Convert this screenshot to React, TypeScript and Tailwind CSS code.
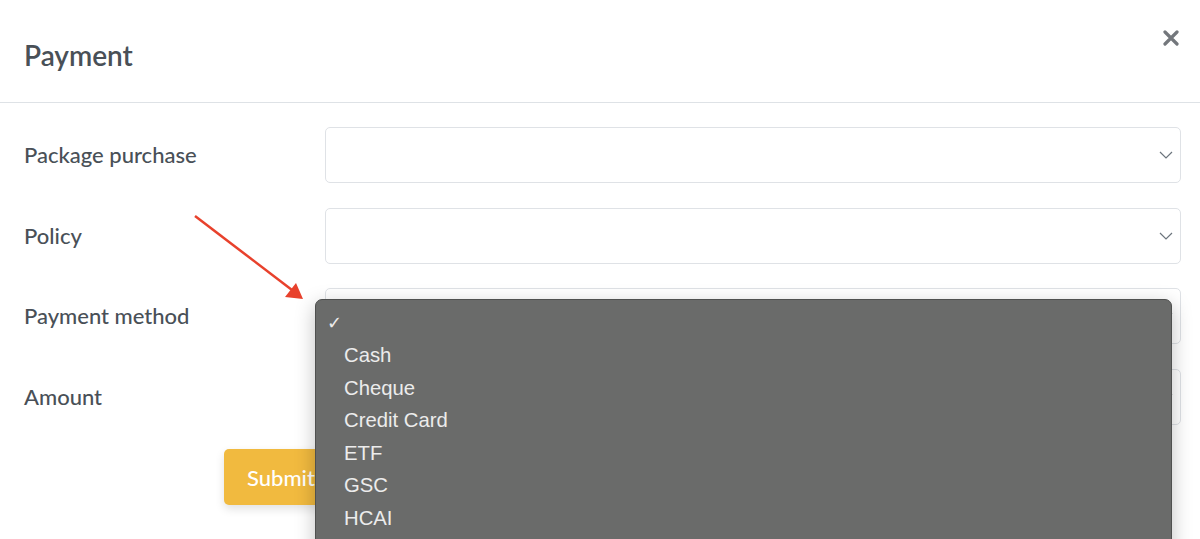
import React from "react";

function Chevron() {
  return (
    <svg width="14" height="8" viewBox="0 0 14 8" className="absolute right-[7px] top-1/2 -translate-y-1/2">
      <path d="M1 1l6 6 6-6" fill="none" stroke="#6c757d" strokeWidth="1.2" />
    </svg>
  );
}

function SelectBox() {
  return (
    <div className="relative h-[56px] flex-1 rounded-[5px] border border-[#dfe2e6] bg-white">
      <Chevron />
    </div>
  );
}

export default function App() {
  const items = ["Cash", "Cheque", "Credit Card", "ETF", "GSC", "HCAI"];
  const rows = ["Package purchase", "Policy", "Payment method", "Amount"];
  return (
    <div className="relative h-[539px] w-[1200px] overflow-hidden bg-white" style={{ fontFamily: "Lato, 'Open Sans', sans-serif" }}>
      <div className="flex h-[103px] items-start justify-between border-b border-[#dee2e6] pl-6 pr-[21px]">
        <h1 className="mt-[37px] text-[28px] font-semibold leading-[36px] text-[#495057]">Payment</h1>
        <svg width="16" height="16" viewBox="0 0 16 16" className="mt-[30px]">
          <path d="M2 2l12 12M14 2L2 14" stroke="#73777c" strokeWidth="3.2" strokeLinecap="round" />
        </svg>
      </div>
      <div className="flex flex-col gap-[24.6px] pl-6 pr-[19px] pt-[24px]">
        {rows.map((r) => (
          <div key={r} className="flex items-center">
            <div className="-mt-[1px] w-[301px] text-[22px] font-medium text-[#495057]">{r}</div>
            <SelectBox />
          </div>
        ))}
        <div className="pl-[200px]">
          <button className="h-[56px] w-[130px] rounded-[5px] bg-[#f1ba3f] pl-[23px] text-left text-[22px] font-medium text-white shadow-[0_4px_10px_rgba(0,0,0,0.12)]">
            Submit
          </button>
        </div>
      </div>

      <svg className="absolute left-0 top-0" width="1200" height="539">
        <line x1="195" y1="216" x2="292" y2="290" stroke="#e8412c" strokeWidth="2.5" />
        <polygon points="303,299 285,297 296,283" fill="#e8412c" />
      </svg>

      <div
        className="absolute left-[315px] top-[299px] h-[260px] w-[857px] rounded-[7px] border border-[#4f504f] bg-[#6a6b6a] pt-[8px] shadow-[0_6px_20px_rgba(0,0,0,0.25)]"
        style={{ fontFamily: "'Liberation Sans', Arial, sans-serif" }}
      >
        <div className="flex h-[31px] items-center pl-[11px] text-[18px] text-[#ececec]">✓</div>
        {items.map((i) => (
          <div key={i} className="flex h-[32.6px] items-center pl-[28px] text-[20.3px] text-[#ececec]">
            {i}
          </div>
        ))}
      </div>
    </div>
  );
}
